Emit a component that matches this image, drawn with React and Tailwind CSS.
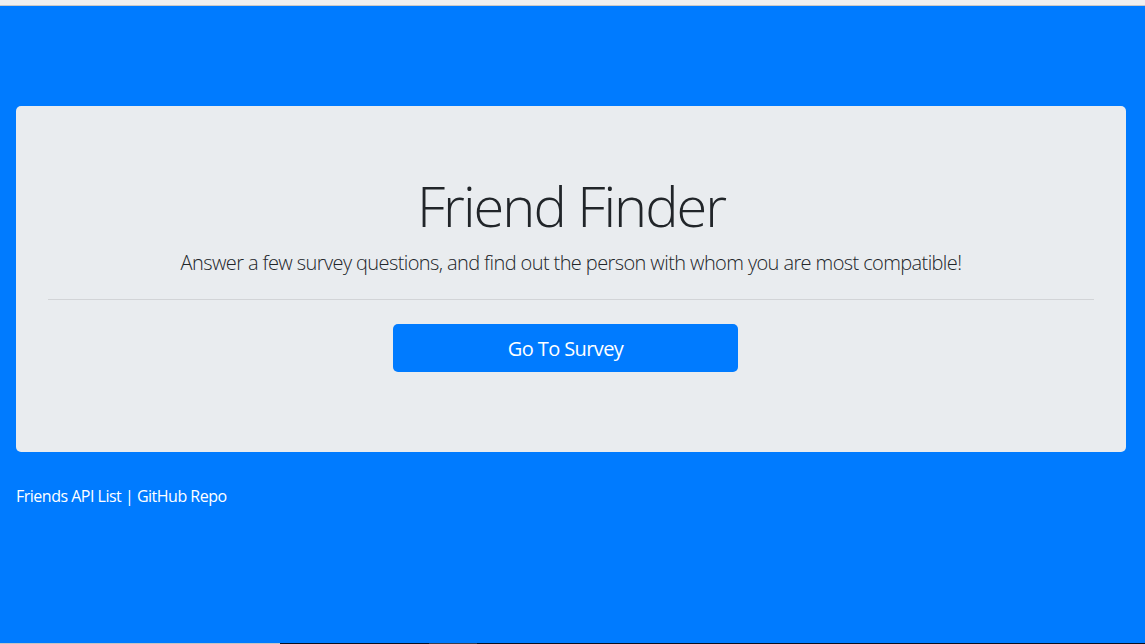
export default function App() {
  return (
    <div className="h-[644px] overflow-hidden bg-[#007bff] flex flex-col" style={{ fontFamily: '"Open Sans", "Noto Sans", sans-serif' }}>
      <div className="h-[6px] shrink-0 bg-[#f0f0f0] border-b border-[#c9c9c9]" />
      <div className="ml-4 mr-[19px] mt-[100px] bg-[#e9ecef] rounded-[5px] px-8 pt-16 pb-16 text-center text-[#212529]">
        <h1 className="text-[56px] font-light leading-[1.2] pt-[2px] mb-[9px] tracking-[-2px]">Friend Finder</h1>
        <p className="text-[20px] font-light leading-[1.5] text-[#212529] tracking-[-0.6px]">
          Answer a few survey questions, and find out the person with whom you are most compatible!
        </p>
        <hr className="mt-[21px] mb-6 border-t border-[#d2d4d7]" />
        <div className="flex justify-center mb-4 pr-[11px]">
          <a className="w-[345px] h-[48px] flex items-center justify-center pt-[2px] bg-[#007bff] text-white text-[20px] rounded-[5px] tracking-[-0.6px]">
            Go To Survey
          </a>
        </div>
      </div>
      <div className="ml-4 mt-8 text-[16px] leading-6 text-white tracking-[-0.5px]">
        <a>Friends API List</a> | <a>GitHub Repo</a>
      </div>
      <div className="mt-auto h-px flex">
        <div className="w-[280px] bg-[#c4c4c4]" />
        <div className="w-[149px] bg-[#0b0f1e]" />
        <div className="w-[48px] bg-[#3b3d4a]" />
        <div className="flex-1 bg-[#0b0f1e]" />
      </div>
    </div>
  );
}
